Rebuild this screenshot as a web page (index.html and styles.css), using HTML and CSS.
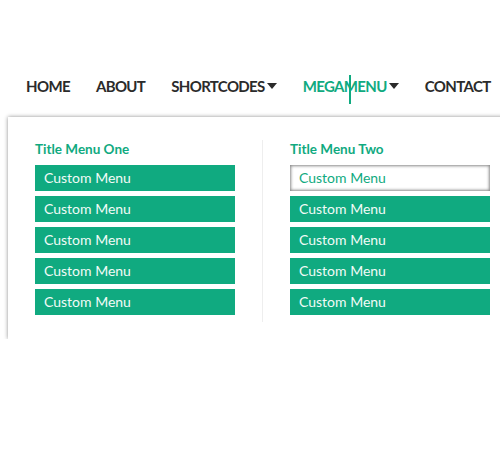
FILE: index.html
```html
<!doctype html>
<html lang="en">
  <head>
    <meta charset="utf-8">
    <meta name="viewport" content="width=device-width, initial-scale=1">
    <title>Mega Menu</title>
    <link rel="stylesheet" href="styles.css">
  </head>
  <body>
    <div class="nav-wrap">
        <ul class="nav">
            <li><a href="#">Home</a></li>
            <li><a href="#">About</a></li>
            <li><a href="#">Shortcodes<span class="caret"></span></a></li>
            <li class="active"><a href="#">Megamenu<span class="caret"></span></a><span class="cursor"></span></li>
            <li><a href="#">Contact</a></li>
        </ul>
        <div class="mega">
            <div class="mega-col">
                <h4>Title Menu One</h4>
                <a class="mega-item" href="#">Custom Menu</a>
                <a class="mega-item" href="#">Custom Menu</a>
                <a class="mega-item" href="#">Custom Menu</a>
                <a class="mega-item" href="#">Custom Menu</a>
                <a class="mega-item" href="#">Custom Menu</a>
            </div>
            <div class="mega-divider"></div>
            <div class="mega-col">
                <h4>Title Menu Two</h4>
                <a class="mega-item hover" href="#">Custom Menu</a>
                <a class="mega-item" href="#">Custom Menu</a>
                <a class="mega-item" href="#">Custom Menu</a>
                <a class="mega-item" href="#">Custom Menu</a>
                <a class="mega-item" href="#">Custom Menu</a>
            </div>
        </div>
    </div>
  </body>
</html>
```

FILE: styles.css
```css
body{
    margin:0;
    background:#fff;
    font-family: Lato,"Noto Sans",Arial,sans-serif;
    overflow:hidden;
}
.nav-wrap{
    padding-top:73px;
}
.nav{
    list-style:none;
    margin:0;
    padding:0 0 0 26px;
    display:flex;
    gap:26px;
    height:26px;
    align-items:center;
}
.nav li{
    position:relative;
}
.nav a{
    text-decoration:none;
    color:#2b2b2b;
    font-weight:700;
    font-size:15px;
    letter-spacing:-0.65px;
    text-transform:uppercase;
    white-space:nowrap;
    display:flex;
    align-items:center;
}
.nav .active a{
    color:#10aa80;
}
.caret{
    display:inline-block;
    width:0;
    height:0;
    border-left:5px solid transparent;
    border-right:5px solid transparent;
    border-top:6px solid #2b2b2b;
    margin-left:2px;
}
.cursor{
    position:absolute;
    left:46px;
    top:-2px;
    width:2px;
    height:29px;
    background:#10aa80;
}
.mega{
    margin:18px 0 0 8px;
    width:520px;
    height:222px;
    background:#fff;
    box-shadow:0 0 4px rgba(0,0,0,0.45);
    display:flex;
    padding:0 0 0 27px;
    box-sizing:border-box;
}
.mega-col{
    width:200px;
    padding-top:23px;
}
.mega-divider{
    width:1px;
    background:#eee;
    margin:23px 27px 17px 27px;
}
.mega-col h4{
    margin:0 0 7px 0;
    color:#10aa80;
    font-size:13.5px;
    font-weight:700;
    height:18px;
    line-height:18px;
}
.mega-item{
    display:block;
    height:26px;
    line-height:26px;
    margin-bottom:5px;
    padding-left:9px;
    background:#10aa80;
    color:#f2fbf7;
    font-size:14px;
    text-decoration:none;
}
.mega-item.hover{
    background:#fff;
    color:#10aa80;
    box-shadow:inset 0 0 3px 1px #888;
}
```
